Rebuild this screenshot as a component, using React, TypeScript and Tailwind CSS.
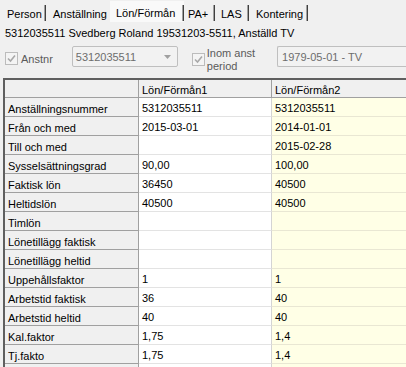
import React from 'react';

const tabs = [
  { label: 'Person', w: 'w-[43px]', pl: 'pl-[4px]', sep: true, active: false },
  { label: 'Anställning', w: 'w-[64px]', pl: 'pl-[7px]', sep: false, active: false },
  { label: 'Lön/Förmån', w: 'w-[74px]', pl: 'pl-[6px]', sep: true, active: true },
  { label: 'PA+', w: 'w-[31px]', pl: 'pl-[4px]', sep: true, active: false },
  { label: 'LAS', w: 'w-[34px]', pl: 'pl-[6px]', sep: true, active: false },
  { label: 'Kontering', w: 'w-[59px]', pl: 'pl-[7px]', sep: true, active: false },
];

const rows: [string, string, string][] = [
  ['Anställningsnummer', '5312035511', '5312035511'],
  ['Från och med', '2015-03-01', '2014-01-01'],
  ['Till och med', '', '2015-02-28'],
  ['Sysselsättningsgrad', '90,00', '100,00'],
  ['Faktisk lön', '36450', '40500'],
  ['Heltidslön', '40500', '40500'],
  ['Timlön', '', ''],
  ['Lönetillägg faktisk', '', ''],
  ['Lönetillägg heltid', '', ''],
  ['Uppehållsfaktor', '1', '1'],
  ['Arbetstid faktisk', '36', '40'],
  ['Arbetstid heltid', '40', '40'],
  ['Kal.faktor', '1,75', '1,4'],
  ['Tj.fakto', '1,75', '1,4'],
  ['', '', ''],
];

const CheckBox = () => (
  <div className="w-[13px] h-[13px] border border-[#bcbcbc] bg-[#f4f4f4] flex items-center justify-center">
    <svg width="9" height="9" viewBox="0 0 9 9">
      <path d="M1 4.5 L3.5 7 L8 1.5" fill="none" stroke="#a8a8a8" strokeWidth="1.6" />
    </svg>
  </div>
);

const App = () => {
  return (
    <div className="w-[406px] h-[367px] overflow-hidden bg-[#f0f0f0] font-['Liberation_Sans',Arial,sans-serif] text-[11px] leading-[13px] text-black">
      {/* tabs */}
      <div className="h-[22px] flex pl-[3px]">
        {tabs.map((t) => (
          <div
            key={t.label}
            className={`${t.w} flex ${t.active ? 'mt-[1px] bg-[#f9f9f9]' : 'mt-[3px]'}`}
          >
            <div className={`flex-1 ${t.pl} ${t.active ? 'pt-[6px]' : 'pt-[5px]'} whitespace-nowrap`}>{t.label}</div>
            {t.sep && (
              <div className={`w-[2px] h-[16px] ${t.active ? 'mt-[4px]' : 'mt-[2px]'} bg-[#404040] shadow-[inset_1px_0_0_#a0a0a0]`} />
            )}
          </div>
        ))}
      </div>

      {/* info line */}
      <div className="h-[21px] pl-[5px] pt-[5px] whitespace-nowrap">
        5312035511 Svedberg Roland 19531203-5511, Anställd TV
      </div>

      {/* filter row */}
      <div className="h-[35px] flex items-start">
        <div className="ml-[5px] mt-[9px]">
          <CheckBox />
        </div>
        <div className="ml-[3px] mt-[10px] text-[#5a5a5a]">Anstnr</div>
        <div className="ml-[19px] mt-[3px] w-[106px] h-[21px] border border-[#bfbfbf] rounded-[2px] bg-[#f2f2f2] flex items-center pl-[3px] pr-[6px] text-[#6d6d6d]">
          <span className="flex-1 pt-[1px]">5312035511</span>
          <svg width="7" height="4" viewBox="0 0 7 4">
            <path d="M0 0 H7 L3.5 4 Z" fill="#a0a0a0" />
          </svg>
        </div>
        <div className="ml-[14px] mt-[10px]">
          <CheckBox />
        </div>
        <div className="ml-[2px] mt-[4px] text-[#5a5a5a] leading-[13px]">
          Inom anst
          <br />
          period
        </div>
        <div className="ml-[22px] mt-[3px] flex-1 h-[21px] border border-r-0 border-[#bfbfbf] rounded-l-[2px] bg-[#f2f2f2] flex items-center pl-[4px] text-[#6d6d6d]">
          <span className="pt-[1px]">1979-05-01 - TV</span>
        </div>
      </div>

      {/* grid */}
      <div className="ml-[3px] border-t-2 border-l-2 border-t-[#5f5f5f] border-l-[#5f5f5f]">
        <div className="flex h-[18px] bg-[#f0f0f0] border-b border-[#a0a0a0]">
          <div className="w-[134px] border-r border-[#a0a0a0]" />
          <div className="w-[133px] border-r border-[#a0a0a0] pl-[3px] pt-[4px]">Lön/Förmån1</div>
          <div className="flex-1 pl-[3px] pt-[4px]">Lön/Förmån2</div>
        </div>
        {rows.map((r, i) => (
          <div key={i} className="flex h-[19px]">
            <div className="w-[134px] bg-[#f0f0f0] border-r border-b border-[#a0a0a0] pl-[3px] pt-[5px] whitespace-nowrap">
              {r[0]}
            </div>
            <div className="w-[133px] bg-white border-r border-r-[#d4d4d4] border-b border-b-[#e3e3e3] pl-[3px] pt-[4px]">
              {r[1]}
            </div>
            <div className="flex-1 bg-[#ffffe6] border-b border-[#e9e7d3] pl-[3px] pt-[4px]">{r[2]}</div>
          </div>
        ))}
      </div>
    </div>
  );
};

export default App;
